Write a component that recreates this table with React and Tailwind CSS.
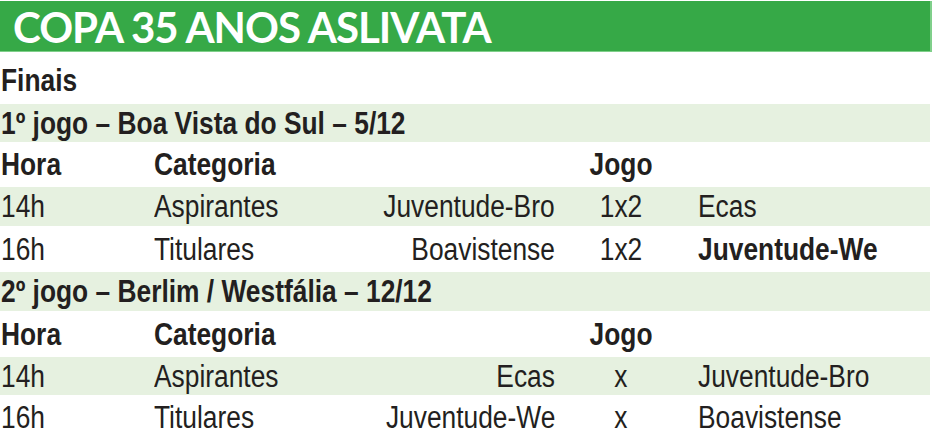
const T = ({ o = 'origin-left', children }) => (
  <span className={`inline-block whitespace-nowrap scale-x-[0.85] ${o}`}>{children}</span>
);

const Row = ({ band, h, c1, c2, c3, c4, c5, bold, c5bold }) => (
  <div className={`flex items-center w-[930px] ${h} ${band ? 'bg-[#e6f1e0]' : ''} ${bold ? 'font-bold' : ''}`}>
    <div className="w-[154px] pl-[1px] shrink-0"><T>{c1}</T></div>
    <div className="w-[198px] shrink-0"><T>{c2}</T></div>
    <div className="w-[203px] shrink-0 text-right"><T o="origin-right">{c3}</T></div>
    <div className="w-[132px] shrink-0 text-center"><T o="origin-center">{c4}</T></div>
    <div className={`pl-[11px] ${c5bold ? 'font-bold' : ''}`}><T>{c5}</T></div>
  </div>
);

const Title = ({ h, children }) => (
  <div className={`flex items-center w-[930px] ${h} bg-[#e6f1e0] font-bold pl-[1px]`}><T>{children}</T></div>
);

export default function App() {
  return (
    <div className="w-[949px] h-[447px] bg-white text-[#231f20] text-[31px] leading-none font-['Liberation_Sans',Arial,sans-serif]">
      <div className="h-[1px]" />
      <div className="w-[932px] h-[51px] bg-[#36a947] border-r-2 border-b border-[#7fcf8a] flex items-center pl-[13px] pt-[2px]">
        <span className="font-['Lato',sans-serif] font-bold text-white text-[42px] tracking-[-1px] whitespace-nowrap">COPA 35 ANOS ASLIVATA</span>
      </div>
      <div className="h-[52px] flex items-center pl-[1px] pt-[4px] font-bold"><T>Finais</T></div>
      <Title h="h-[38px]">1º jogo – Boa Vista do Sul – 5/12</Title>
      <Row h="h-[45px]" bold c1="Hora" c2="Categoria" c3="" c4="Jogo" c5="" />
      <Row band h="h-[39px]" c1="14h" c2="Aspirantes" c3="Juventude-Bro" c4="1x2" c5="Ecas" />
      <Row h="h-[46px]" c1="16h" c2="Titulares" c3="Boavistense" c4="1x2" c5="Juventude-We" c5bold />
      <Title h="h-[39px]">2º jogo – Berlim / Westfália – 12/12</Title>
      <Row h="h-[46px]" bold c1="Hora" c2="Categoria" c3="" c4="Jogo" c5="" />
      <Row band h="h-[38px]" c1="14h" c2="Aspirantes" c3="Ecas" c4="x" c5="Juventude-Bro" />
      <Row h="h-[45px]" c1="16h" c2="Titulares" c3="Juventude-We" c4="x" c5="Boavistense" />
    </div>
  );
}
